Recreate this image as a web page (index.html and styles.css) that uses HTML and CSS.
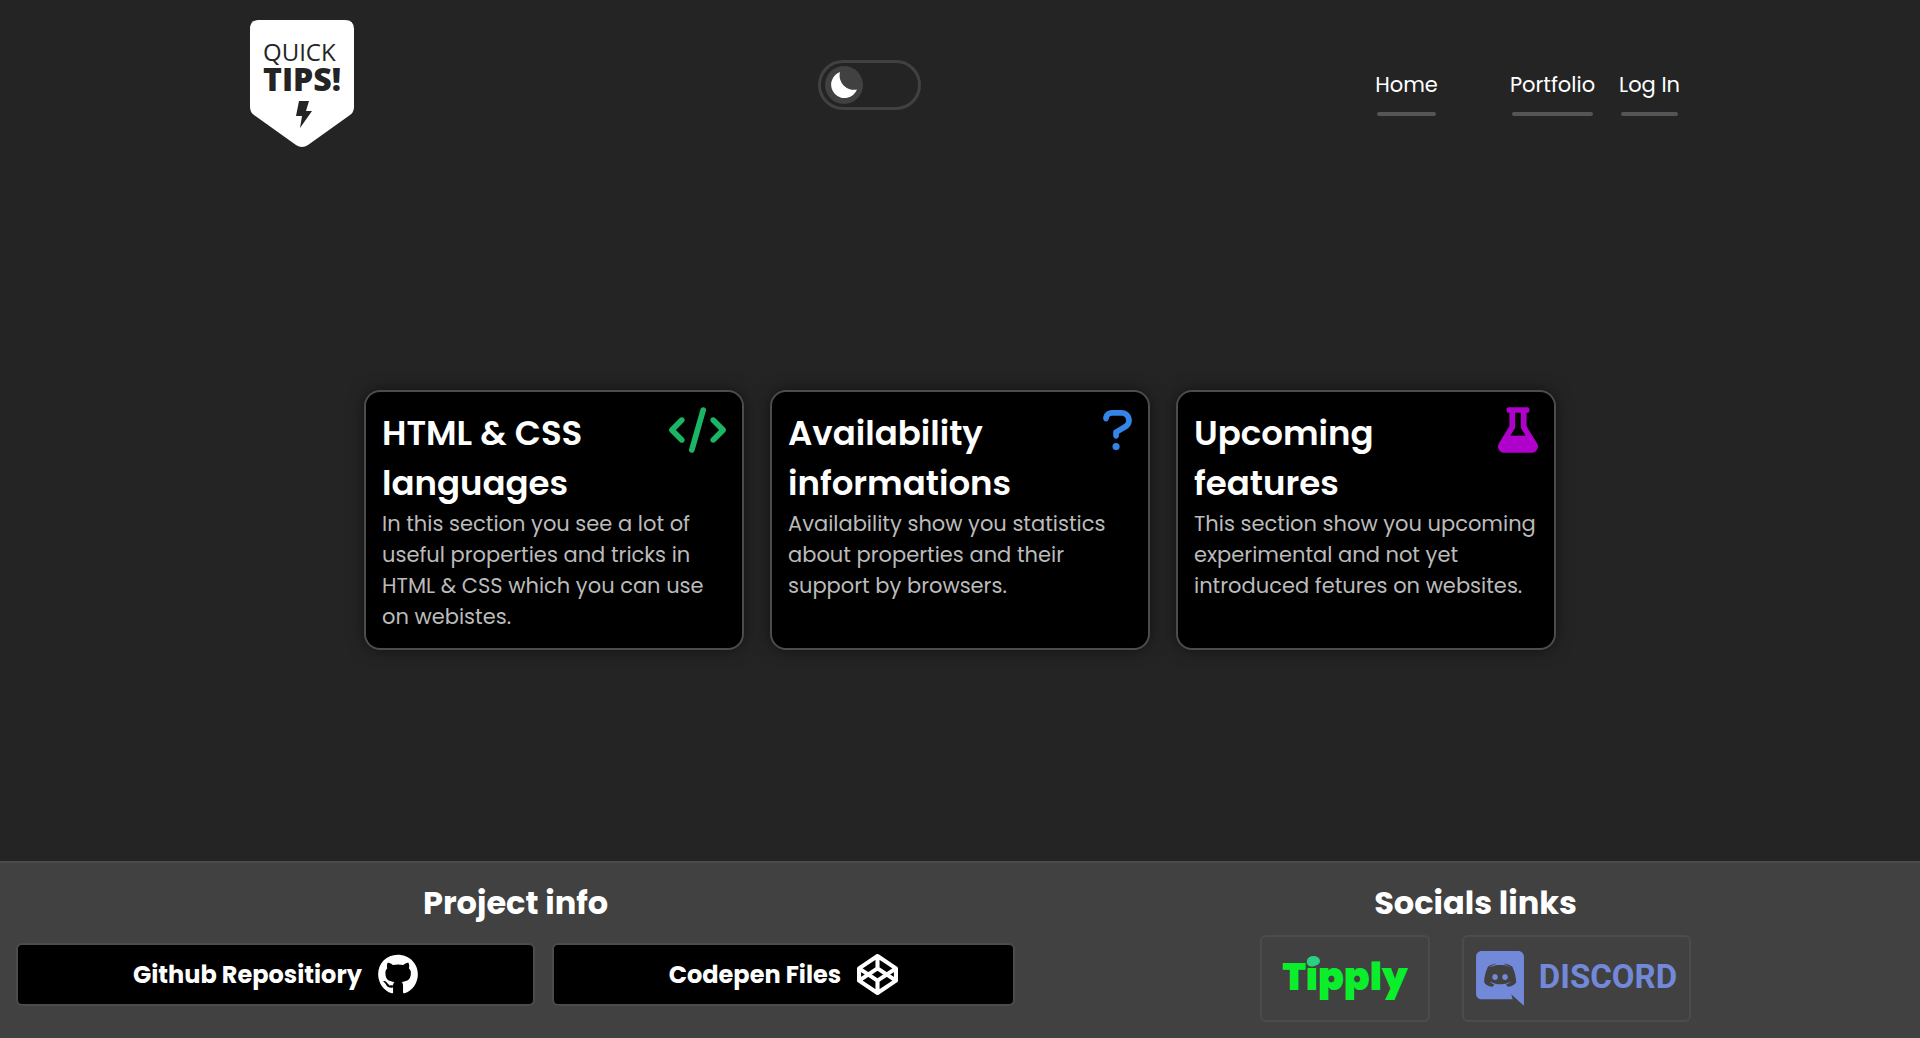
FILE: index.html
```html
<!DOCTYPE html>
<html lang="en">
<head>
  <meta charset="utf-8">
  <meta name="viewport" content="width=device-width, initial-scale=1">
  <title>Quick Tips!</title>
  <link rel="stylesheet" href="styles.css">
</head>
<body>
  <header class="header">
    <a class="logo" href="#" aria-label="Quick Tips!">
      <svg class="logo-mark" viewBox="0 0 104 128" width="104" height="128">
        <path fill="#fff" d="M9 0H95Q104 0 104 9V87Q104 92 100 95L58 125Q52 129 46 125L4 95Q0 92 0 87V9Q0 0 9 0Z"/>
        <text class="logo-quick" x="13" y="41">QUICK</text>
        <text class="logo-tips" x="13" y="71">TIPS!</text>
        <path fill="#242424" d="M49 81H59L56 91H62L50 108L52 96H46Z"/>
      </svg>
    </a>

    <label class="theme-switch">
      <input class="theme-input" type="checkbox" aria-label="Light theme">
      <span class="theme-knob">
        <svg viewBox="0 0 26 26" width="26" height="26" fill="#fff"><path d="M9 0A13.4 13.4 0 1 0 26 17.5A14.4 14.4 0 0 1 9 0Z"/></svg>
      </span>
    </label>

    <nav class="nav">
      <a class="nav-link nav-home" href="#">Home</a>
      <a class="nav-link" href="#">Portfolio</a>
      <a class="nav-link" href="#">Log In</a>
    </nav>
  </header>

  <main class="main">
    <a class="card" href="#">
      <div class="card-head">
        <h2 class="card-title">HTML &amp; CSS languages</h2>
        <svg class="card-icon icon-code" viewBox="0 0 640 512" width="57" height="46"><path d="M392.8 1.2c-17-4.9-34.7 5-39.6 22l-128 448c-4.9 17 5 34.7 22 39.6s34.7-5 39.6-22l128-448c4.9-17-5-34.7-22-39.6zm80.6 120.1c-12.5 12.5-12.5 32.8 0 45.3L562.7 256l-89.4 89.4c-12.5 12.5-12.5 32.8 0 45.3s32.8 12.5 45.3 0l112-112c12.5-12.5 12.5-32.8 0-45.3l-112-112c-12.5-12.5-32.8-12.5-45.3 0zm-306.7 0c-12.5-12.5-32.8-12.5-45.3 0l-112 112c-12.5 12.5-12.5 32.8 0 45.3l112 112c12.5 12.5 32.8 12.5 45.3 0s12.5-32.8 0-45.3L77.3 256l89.4-89.4c12.5-12.5 12.5-32.8 0-45.3z"/></svg>
      </div>
      <p class="card-text">In this section you see a lot of useful properties and tricks in HTML &amp; CSS which you can use on webistes.</p>
    </a>

    <a class="card" href="#">
      <div class="card-head">
        <h2 class="card-title">Availability informations</h2>
        <svg class="card-icon icon-question" viewBox="0 0 320 512" width="29" height="46"><path d="M204.3 32H96c-52.9 0-96 43.1-96 96c0 17.7 14.3 32 32 32s32-14.3 32-32c0-17.6 14.3-32 32-32h108.3C232.8 96 256 119.2 256 147.8c0 19.7-11 37.5-30.5 47.3L127.8 252.4C117.1 258.2 112 268.7 112 280v40c0 17.7 14.3 32 32 32s32-14.3 32-32V298.3L256 251.3c39.5-19.8 64-59.4 64-103.5C320 84 268.1 32 204.3 32zM144 400a40 40 0 1 0 0 80a40 40 0 1 0 0-80z"/></svg>
      </div>
      <p class="card-text">Availability show you statistics about properties and their support by browsers.</p>
    </a>

    <a class="card" href="#">
      <div class="card-head">
        <h2 class="card-title">Upcoming features</h2>
        <svg class="card-icon icon-flask" viewBox="0 0 448 512" width="40" height="46"><path d="M437.2 403.5L320 215V64h8c13.3 0 24-10.7 24-24V24c0-13.3-10.7-24-24-24H120c-13.3 0-24 10.7-24 24v16c0 13.3 10.7 24 24 24h8v151L10.8 403.5C-18.5 450.6 15.3 512 70.9 512h306.2c55.7 0 89.4-61.5 60.1-108.5zM137.9 320l48.2-77.6c3.7-5.2 5.8-11.6 5.8-18.4V64h64v160c0 6.9 2.2 13.2 5.8 18.4l48.2 77.6h-172z"/></svg>
      </div>
      <p class="card-text">This section show you upcoming experimental and not yet introduced fetures on websites.</p>
    </a>
  </main>

  <footer class="footer">
    <section class="footer-project">
      <h2 class="footer-title">Project info</h2>
      <div class="project-links">
        <a class="project-link" href="#">Github Repositiory
          <svg viewBox="0 0 496 512" width="40" height="41" fill="#fff"><path d="M165.9 397.4c0 2-2.3 3.6-5.2 3.6-3.3.3-5.6-1.3-5.6-3.6 0-2 2.3-3.6 5.2-3.6 3-.3 5.6 1.3 5.6 3.6zm-31.1-4.5c-.7 2 1.3 4.3 4.3 4.9 2.6 1 5.6 0 6.2-2s-1.3-4.3-4.3-5.2c-2.6-.7-5.5.3-6.2 2.3zm44.2-1.7c-2.9.7-4.9 2.6-4.6 4.9.3 2 2.9 3.3 5.9 2.6 2.9-.7 4.9-2.6 4.6-4.6-.3-1.9-3-3.2-5.9-2.9zM244.8 8C106.1 8 0 113.3 0 252c0 110.9 69.8 205.8 169.5 239.2 12.8 2.3 17.3-5.6 17.3-12.1 0-6.2-.3-40.4-.3-61.4 0 0-70 15-84.7-29.8 0 0-11.4-29.1-27.8-36.6 0 0-22.9-15.7 1.6-15.4 0 0 24.9 2 38.6 25.8 21.9 38.6 58.6 27.5 72.9 20.9 2.3-16 8.8-27.1 16-33.7-55.9-6.2-112.3-14.3-112.3-110.5 0-27.5 7.6-41.3 23.6-58.9-2.6-6.5-11.1-33.3 2.6-67.9 20.9-6.5 69 27 69 27 20-5.6 41.5-8.5 62.8-8.5s42.8 2.9 62.8 8.5c0 0 48.1-33.6 69-27 13.7 34.7 5.2 61.4 2.6 67.9 16 17.7 25.8 31.5 25.8 58.9 0 96.5-58.9 104.2-114.8 110.5 9.2 7.9 17 22.9 17 46.4 0 33.7-.3 75.4-.3 83.6 0 6.5 4.6 14.4 17.3 12.1C428.2 457.8 496 362.9 496 252 496 113.3 383.5 8 244.8 8z"/></svg>
        </a>
        <a class="project-link" href="#">Codepen Files
          <svg viewBox="0 0 40 40" width="41" height="41" fill="none" stroke="#fff" stroke-width="4" stroke-linejoin="round"><path d="M20 2L38 14V26L20 38L2 26V14ZM20 2V14M20 26V38M2 14L20 26L38 14M2 26L20 14L38 26"/></svg>
        </a>
      </div>
    </section>

    <section class="footer-social">
      <h2 class="footer-title">Socials links</h2>
      <div class="social-links">
        <a class="social-link tipply" href="#"><span class="tipply-name">Tipply<span class="tipply-dot"></span></span></a>
        <a class="social-link discord" href="#">
          <svg viewBox="35 20 175 201" width="48" height="55" fill="#7289da"><path d="M104.4 103.9c-5.7 0-10.2 5-10.2 11.1s4.6 11.1 10.2 11.1c5.7 0 10.2-5 10.2-11.1.1-6.1-4.5-11.1-10.2-11.1zM140.9 103.9c-5.7 0-10.2 5-10.2 11.1s4.6 11.1 10.2 11.1c5.7 0 10.2-5 10.2-11.1s-4.5-11.1-10.2-11.1z"/><path d="M189.5 20h-134C44.2 20 35 29.2 35 40.6v135.2c0 11.4 9.2 20.6 20.5 20.6h113.4l-5.3-18.5 12.8 11.9 12.1 11.2 21.5 19V40.6c0-11.4-9.2-20.6-20.5-20.6zm-38.6 130.6s-3.6-4.3-6.6-8.1c13.1-3.7 18.1-11.9 18.1-11.9-4.1 2.7-8 4.6-11.5 5.9-5 2.1-9.8 3.5-14.5 4.3-9.6 1.8-18.4 1.3-25.9-.1-5.7-1.1-10.6-2.7-14.7-4.3-2.3-.9-4.8-2-7.3-3.4-.3-.2-.6-.3-.9-.5-.2-.1-.3-.2-.4-.3-1.8-1-2.8-1.7-2.8-1.7s4.8 8 17.5 11.8c-3 3.8-6.7 8.3-6.7 8.3-22.1-.7-30.5-15.2-30.5-15.2 0-32.2 14.4-58.3 14.4-58.3 14.4-10.8 28.1-10.5 28.1-10.5l1 1.2c-18 5.2-26.3 13.1-26.3 13.1s2.2-1.2 5.9-2.9c10.7-4.7 19.2-6 22.7-6.3.6-.1 1.1-.2 1.7-.2 6.1-.8 13-1 20.2-.2 9.5 1.1 19.7 3.9 30.1 9.6 0 0-7.9-7.5-24.9-12.7l1.4-1.6s13.7-.3 28.1 10.5c0 0 14.4 26.1 14.4 58.3 0 0-8.5 14.5-30.6 15.2z"/></svg>
          <span class="discord-name">DISCORD</span>
        </a>
      </div>
    </section>
  </footer>
</body>
</html>
```
FILE: styles.css
```css
* {
  box-sizing: border-box;
  margin: 0;
  padding: 0;
}

body {
  min-height: 100vh;
  display: flex;
  flex-direction: column;
  background: #242424;
  color: #fff;
  font-family: Poppins, Inter, "Open Sans", sans-serif;
}

a {
  color: inherit;
  text-decoration: none;
}

svg {
  display: block;
  flex: none;
}

/* Header */
.header {
  width: 75%;
  margin: 0 auto;
  padding: 20px 0;
  display: flex;
  justify-content: space-between;
  align-items: center;
}

.logo {
  padding: 0 10px;
}

.logo-quick,
.logo-tips {
  font-family: "Open Sans", sans-serif;
  fill: #242424;
}

.logo-quick {
  font-size: 24px;
  font-weight: 400;
}

.logo-tips {
  font-size: 32px;
  font-weight: 800;
}

.theme-switch {
  position: relative;
  width: 103px;
  height: 50px;
  margin-top: 2px;
  padding: 3px 4px;
  border: 3px solid #414141;
  border-radius: 25px;
  cursor: pointer;
}

.theme-input {
  position: absolute;
  inset: 0;
  opacity: 0;
}

.theme-knob {
  width: 38px;
  height: 38px;
  display: flex;
  align-items: center;
  justify-content: center;
  border-radius: 50%;
  background: #414141;
}

.theme-input:checked + .theme-knob {
  margin-left: auto;
}

.nav {
  display: flex;
  gap: 24px;
  margin-top: 2px;
}

.nav-link {
  font-size: 21px;
  font-weight: 400;
  line-height: 32px;
}

.nav-link::after {
  content: "";
  display: block;
  height: 4px;
  margin: 11px 2px -15px;
  border-radius: 2px;
  background: #555;
}

.nav-home {
  margin-right: 48px;
}

/* Cards */
.main {
  flex: 1;
  padding: 11px 16px 0;
  display: flex;
  flex-wrap: wrap;
  justify-content: center;
  align-content: center;
  gap: 26px;
}

.card {
  width: 380px;
  padding: 16px;
  border: 2px solid #4c4c4c;
  border-radius: 16px;
  background: #000;
  box-shadow: 0 0 16px rgba(0, 0, 0, 0.5);
}

.card-head {
  display: flex;
  justify-content: space-between;
  align-items: flex-start;
}

.card-title {
  max-width: 240px;
  font-size: 34px;
  font-weight: 600;
  line-height: 50px;
}

.card-icon {
  margin-top: -1px;
}

.icon-code {
  fill: #1bb566;
}

.icon-question {
  fill: #3584e8;
}

.icon-flask {
  fill: #b000cc;
}

.card-text {
  color: #bbb;
  font-size: 21px;
  line-height: 31px;
}

/* Footer */
.footer {
  display: grid;
  grid-template-columns: 58fr 50fr;
  padding: 16px 0;
  border-top: 2px solid #4c4c4c;
  background: #414141;
}

.footer-project {
  padding: 0 16px;
}

.footer-title {
  font-size: 32px;
  font-weight: 700;
  line-height: 48px;
  text-align: center;
}

.project-links {
  display: flex;
  gap: 17px;
  margin-top: 16px;
}

.project-link {
  flex: 1 1 auto;
  height: 63px;
  display: flex;
  align-items: center;
  justify-content: center;
  gap: 16px;
  border: 2px solid #4c4c4c;
  border-radius: 6px;
  background: #000;
  font-size: 24px;
  font-weight: 700;
}

.social-links {
  display: flex;
  justify-content: center;
  gap: 32px;
  margin-top: 8px;
}

.social-link {
  height: 87px;
  display: flex;
  align-items: center;
  justify-content: center;
  border: 2px solid #4c4c4c;
  border-radius: 6px;
}

.tipply {
  width: 170px;
  padding-bottom: 4px;
}

.tipply-name {
  position: relative;
  color: #0bee2b;
  font-size: 38px;
  font-weight: 900;
  line-height: 56px;
}

.tipply-dot {
  position: absolute;
  left: 25px;
  top: 7px;
  width: 13px;
  height: 10px;
  border-radius: 50%;
  background: #2bcf87;
}

.discord {
  width: 229px;
  gap: 15px;
}

.discord-name {
  padding-bottom: 4px;
  color: #7289da;
  font-family: Roboto, "Open Sans", sans-serif;
  font-size: 33px;
  font-weight: 700;
}
```
